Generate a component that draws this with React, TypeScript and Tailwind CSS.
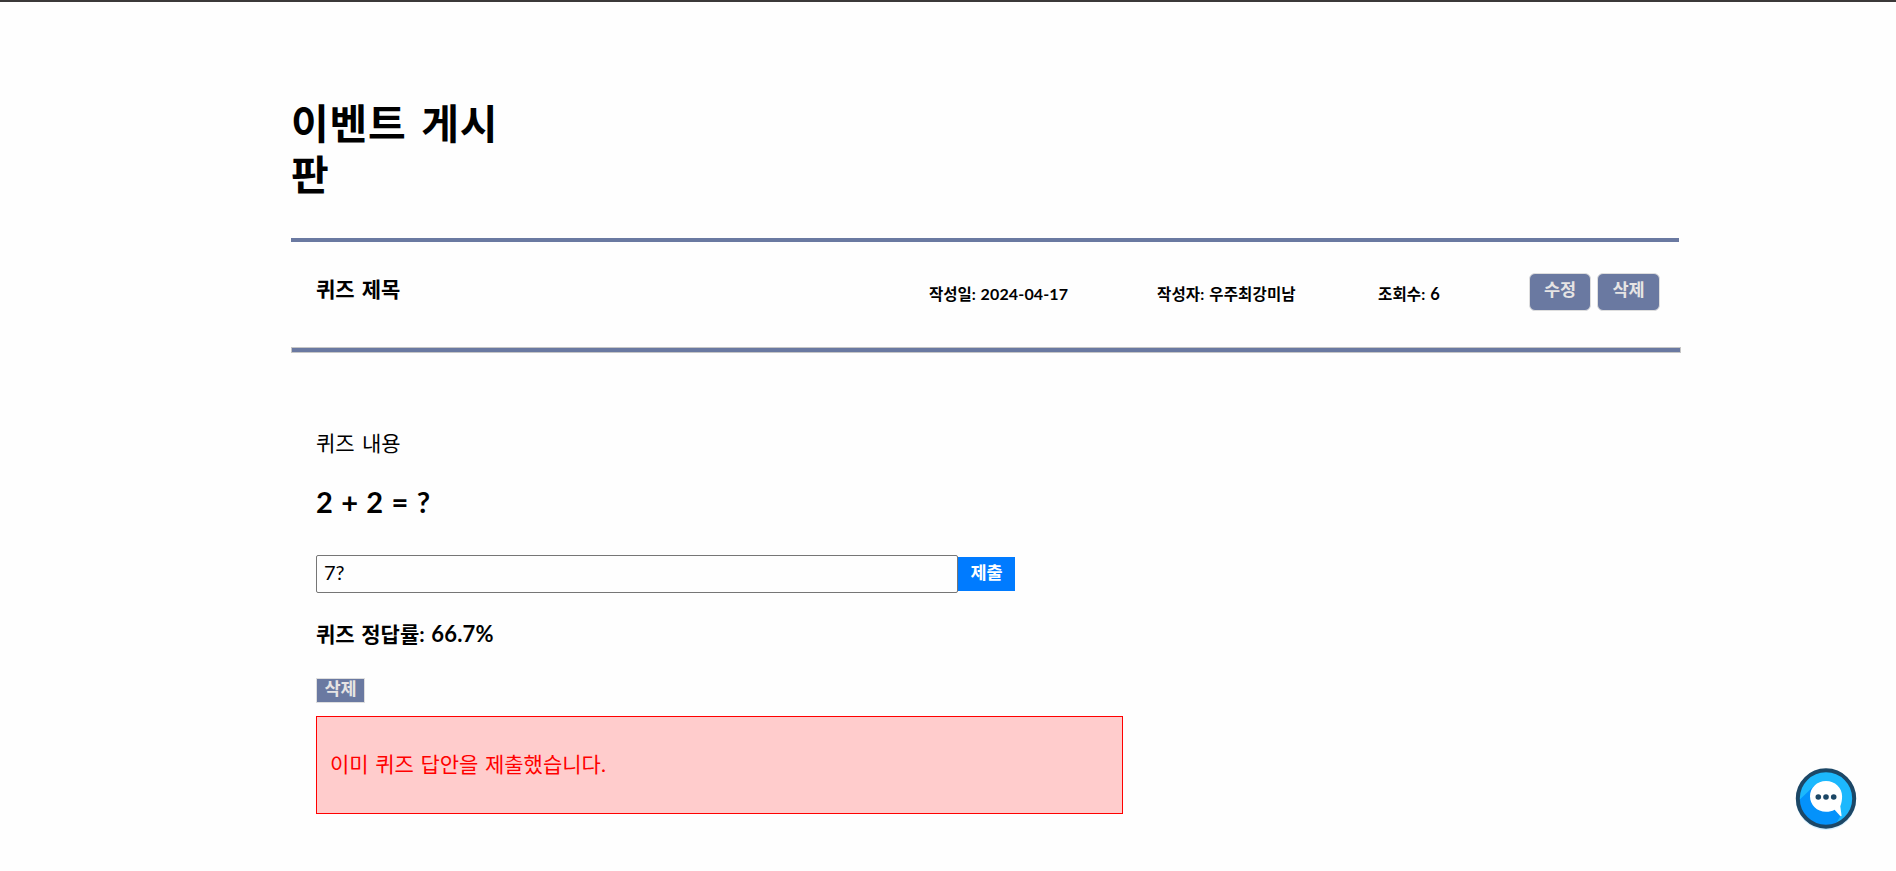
import { useState } from 'react';

const font = "font-['Lato','Noto_Sans_CJK_KR',sans-serif]";

function ChatIcon() {
  return (
    <svg viewBox="0 0 62 64" className="block h-16 w-[62px]">
      <circle cx="31" cy="33" r="30" fill="#d9f1ff" />
      <clipPath id="disc">
        <circle cx="31" cy="31.500" r="28" />
      </clipPath>
      <circle cx="31" cy="31.500" r="28" fill="#1cb8fd" />
      <path d="M0 37 L20 18 L46 48 L38 62 H0 Z" fill="#0492fb" clipPath="url(#disc)" />
      <circle cx="31" cy="31.500" r="28.200" fill="none" stroke="#1c4766" strokeWidth="4" />
      <path
        d="M31 14c-9 0-16 6.600-16 15.300s7 15.500 16 15.500c3.300 0 6.100-.6 8.600-2l5.400 6c.9.9 1.800.4 1.500-.8l-1.200-8.800c1.200-2.900 1.800-6 1.800-9.900C47.100 20.600 40 14 31 14Z"
        fill="#fff"
      />
      <circle cx="23.300" cy="30" r="2.800" fill="#1c4766" />
      <circle cx="31" cy="30" r="2.800" fill="#1c4766" />
      <circle cx="38.700" cy="30" r="2.800" fill="#1c4766" />
    </svg>
  );
}

export default function App() {
  const [answer, setAnswer] = useState('7?');

  return (
    <div lang="ko" className={`h-[871px] w-full overflow-hidden border-t-2 border-[#3b3939] bg-[#fefefe] text-black ${font}`}>
      <main className="ml-[291px] w-[1390px] pt-[96px]">
        <h1 className="h-[140px] w-[230px] text-[41px] leading-[51px] font-bold tracking-[0.8px] break-all [word-spacing:4px]">
          이벤트 게시판
        </h1>

        <header className="flex h-[109px] w-[1388px] items-start border-t-4 border-[#6a79a1] whitespace-nowrap">
          <h2 className="ml-[25px] w-[613px] pt-[35px] text-[21px] leading-[24px] font-bold [word-spacing:2px]">퀴즈 제목</h2>
          <p className="w-[228px] pt-[42px] text-[15.500px] leading-[20px] font-bold [word-spacing:1px]">
            작성일: <span className="text-[16px] tracking-[0.15px]">2024-04-17</span>
          </p>
          <p className="w-[221px] pt-[42px] text-[15.500px] leading-[20px] font-bold tracking-[0.15px] [word-spacing:1px]">작성자: 우주최강미남</p>
          <p className="w-[151px] pt-[42px] text-[15.500px] leading-[20px] font-bold tracking-[0.15px] [word-spacing:1px]">
            조회수: <span className="text-[16.500px]">6</span>
          </p>
          <div className="flex gap-[6px] pt-[31px]">
            <button className="h-[38px] w-[62px] rounded-md border border-[#dedede] bg-[#6a79a1] pb-[5px] text-[17.500px] leading-[20px] font-bold text-[#e6e4e4]">
              수정
            </button>
            <button className="h-[38px] w-[63px] rounded-md border border-[#dedede] bg-[#6a79a1] pb-[5px] text-[17.500px] leading-[20px] font-bold text-[#e6e4e4]">
              삭제
            </button>
          </div>
        </header>
        <hr className="h-[6px] border border-[#c6c6c6] bg-[#6a79a1]" />

        <section className="ml-[25px] flex w-[807px] flex-col items-start pt-[78px]">
          <p className="h-[55px] text-[21px] leading-[24px] [word-spacing:2px]">퀴즈 내용</p>
          <p className="h-[69px] text-[29px] leading-[32px] font-bold [word-spacing:1.3px]">2 + 2 = ?</p>
          <form className="flex items-center" onSubmit={(e) => e.preventDefault()}>
            <input
              value={answer}
              onChange={(e) => setAnswer(e.target.value)}
              className="h-[38px] w-[642px] rounded-[2px] border border-[#767676] bg-[#fefefe] px-[7px] pb-[4px] text-[20px] outline-none"
            />
            <button className="h-[34px] w-[57px] bg-[#007bff] pb-[2px] text-[17.500px] leading-[20px] font-bold text-white">
              제출
            </button>
          </form>
          <p className="mt-[29px] h-[56px] text-[21px] leading-[24px] font-bold [word-spacing:1.5px]">
            퀴즈 정답률: <span className="text-[22px] tracking-[0.2px]">66.7%</span>
          </p>
          <button className="h-[25px] w-[49px] border border-[#dedede] bg-[#6a79a1] pb-[3px] text-[17.500px] leading-[20px] font-bold text-[#e6e4e4]">
            삭제
          </button>
          <div className="mt-[13px] flex h-[98px] w-[807px] items-center border border-[#ff0000] bg-[#ffcccc] pb-[2px] pl-[13px] text-[21px] leading-[24px] text-[#ff0000] [word-spacing:1.2px]">
            이미 퀴즈 답안을 제출했습니다.
          </div>
        </section>
      </main>
      <button aria-label="채팅" className="fixed top-[767px] left-[1795px]">
        <ChatIcon />
      </button>
    </div>
  );
}
